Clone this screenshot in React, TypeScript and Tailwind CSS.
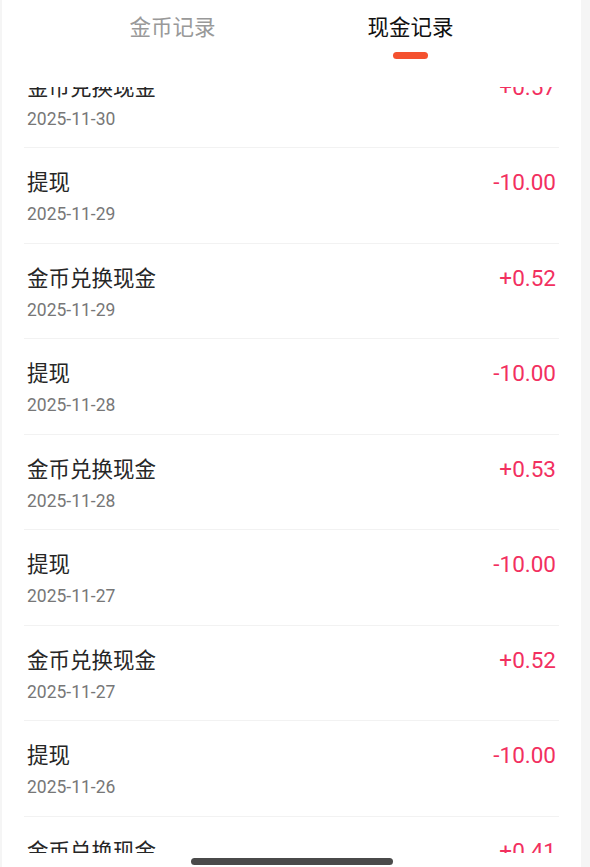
import { useState } from "react";

type Record = { title: string; date: string; amount: string };

const records: Record[] = [
  { title: "金币兑换现金", date: "2025-11-30", amount: "+0.57" },
  { title: "提现", date: "2025-11-29", amount: "-10.00" },
  { title: "金币兑换现金", date: "2025-11-29", amount: "+0.52" },
  { title: "提现", date: "2025-11-28", amount: "-10.00" },
  { title: "金币兑换现金", date: "2025-11-28", amount: "+0.53" },
  { title: "提现", date: "2025-11-27", amount: "-10.00" },
  { title: "金币兑换现金", date: "2025-11-27", amount: "+0.52" },
  { title: "提现", date: "2025-11-26", amount: "-10.00" },
  { title: "金币兑换现金", date: "2025-11-26", amount: "+0.41" },
  { title: "提现", date: "2025-11-25", amount: "-10.00" },
];

const tabs = ["金币记录", "现金记录"] as const;

function RecordRow({ item }: { item: Record }) {
  return (
    <div className="h-[95.5px] shrink-0 border-b border-[#f2f2f2] pt-[21px] flex items-start justify-between">
      <div className="pl-[3px]">
        <p className="text-[21.5px] leading-[27px] text-[#262626]">{item.title}</p>
        <p className="mt-[6px] text-[17.5px] leading-[24px] text-[#777]">{item.date}</p>
      </div>
      <span className="pr-[3px] text-[22.5px] leading-[27px] text-[#f2305f]">{item.amount}</span>
    </div>
  );
}

export default function App() {
  const [active, setActive] = useState<string>("现金记录");

  return (
    <div
      className="h-[867px] w-full bg-[#f5f5f5] flex overflow-hidden"
      style={{ fontFamily: 'Roboto, "Noto Sans CJK SC", sans-serif' }}
    >
      <div className="ml-[2px] w-[579px] h-full bg-white flex flex-col">
        <div className="h-[87px] shrink-0 flex justify-center pt-[13px]">
          {tabs.map((tab) => (
            <button
              key={tab}
              onClick={() => setActive(tab)}
              className="w-[238px] flex flex-col items-center"
            >
              <span
                className={
                  tab === active
                    ? "text-[21.5px] leading-[30px] text-[#111]"
                    : "text-[21.5px] leading-[30px] text-[#999]"
                }
              >
                {tab}
              </span>
              {tab === active && <span className="mt-[9px] h-[7px] w-[35px] rounded-full bg-[#f4512f]" />}
            </button>
          ))}
        </div>

        <div className="flex-1 overflow-hidden px-[22px]">
          <div className="-mt-[34.5px] flex flex-col">
            {records.map((item, i) => (
              <RecordRow key={i} item={item} />
            ))}
          </div>
        </div>

        <div className="h-[14px] shrink-0 flex justify-center">
          <span className="mt-[5px] h-[7px] w-[202px] rounded-full bg-[#4a4a4a]" />
        </div>
      </div>
    </div>
  );
}
